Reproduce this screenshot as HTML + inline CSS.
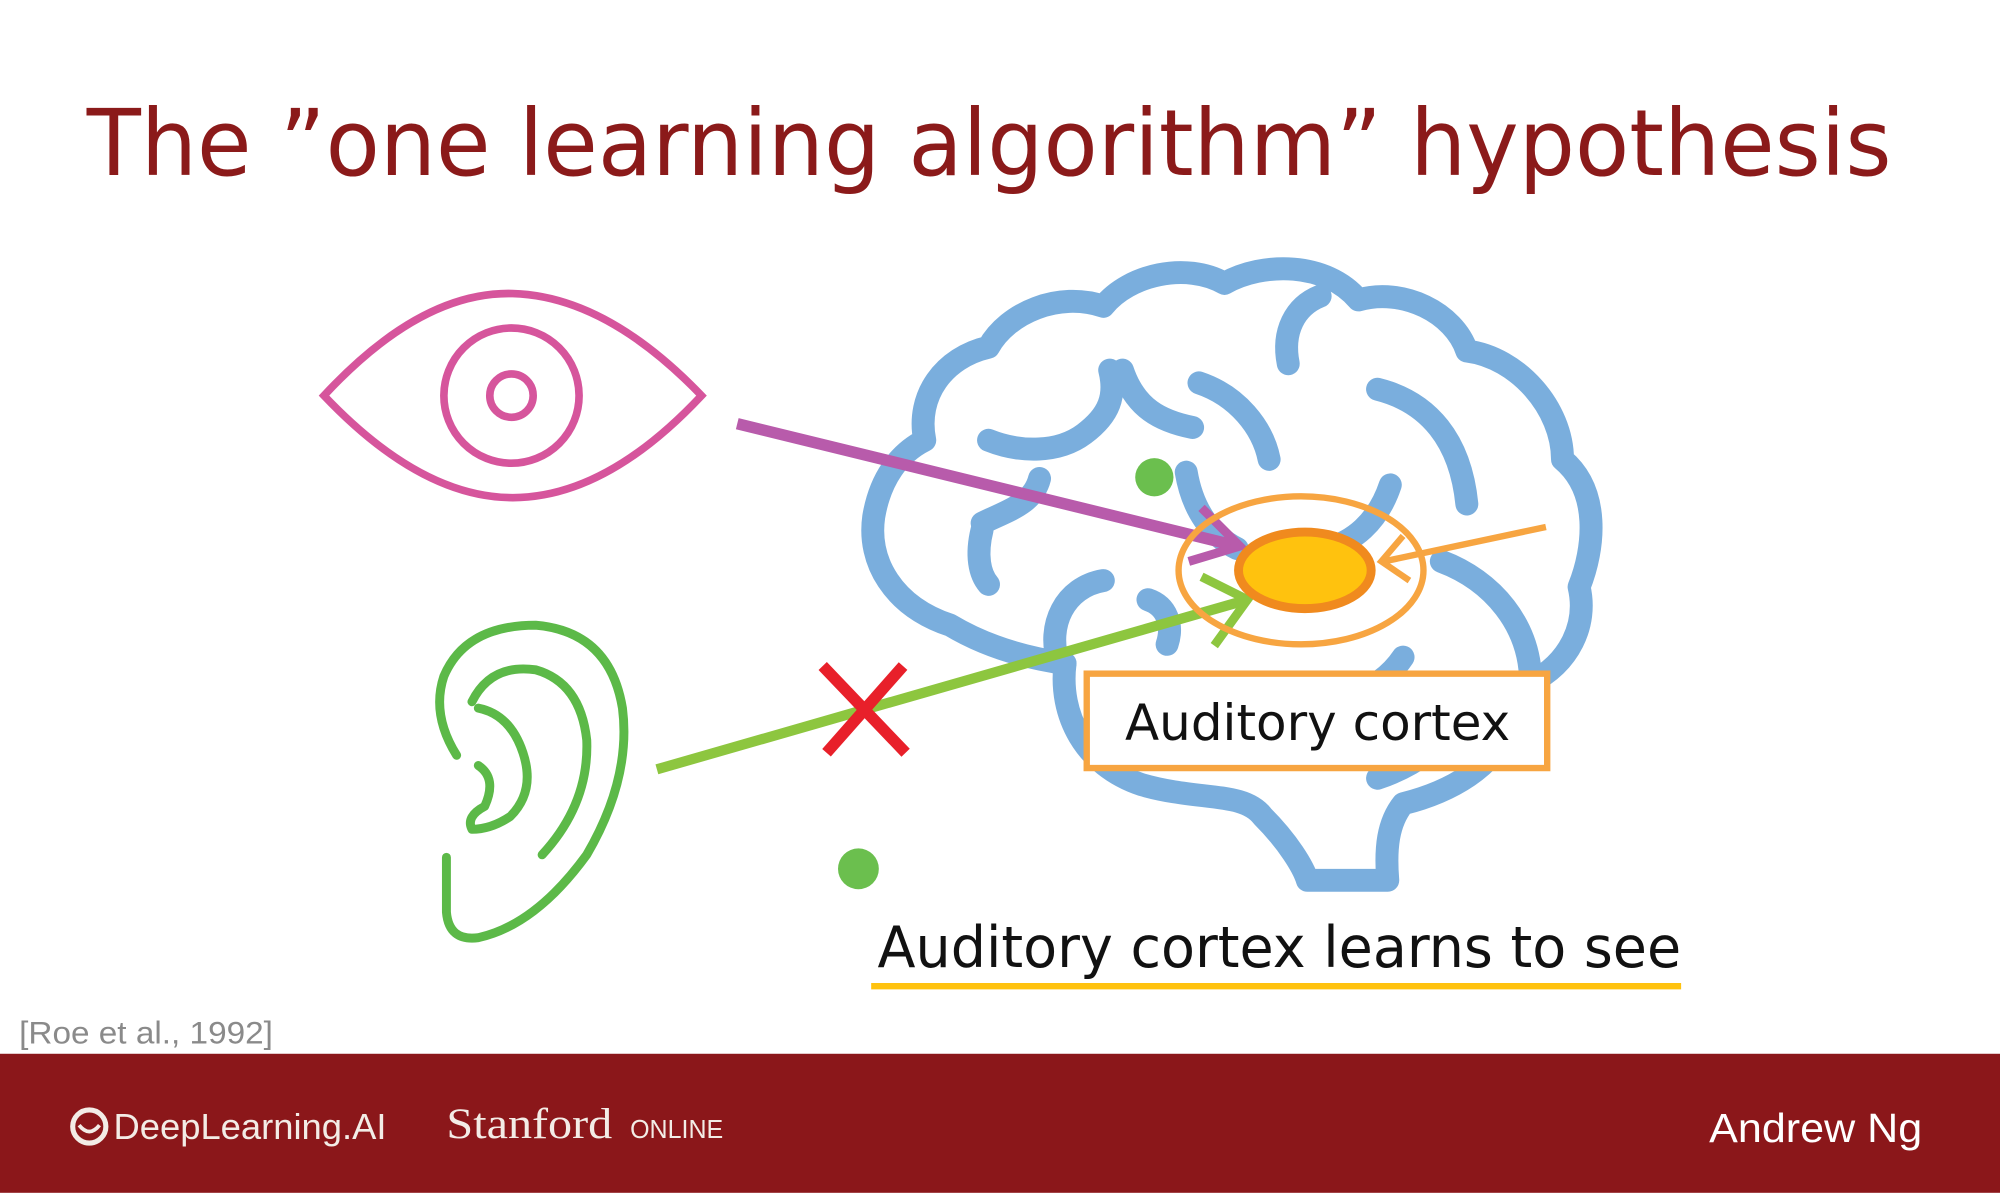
<!DOCTYPE html>
<html><head><meta charset="utf-8"><style>
html,body{margin:0;padding:0;background:#fff;}
svg{display:block}
</style></head><body>
<svg width="2000" height="1193" viewBox="0 0 1568 935" xmlns="http://www.w3.org/2000/svg">
<rect width="1568" height="935" fill="#fff"/>
<text x="68" y="137" font-family="DejaVu Sans, sans-serif" font-size="72" fill="#8B1A1A" textLength="1415" lengthAdjust="spacingAndGlyphs">The ”one learning algorithm” hypothesis</text>

<!-- Brain -->
<g fill="none" stroke="#7AAEDD" stroke-width="18" stroke-linecap="round" stroke-linejoin="round">
<path d="M835 520 C800 515 770 505 745 490 C700 475 680 440 685 405 C690 375 705 355 725 345 C718 310 740 280 775 272 C790 245 830 228 865 240 C885 215 930 205 960 222 C990 205 1040 205 1065 235 C1100 225 1140 245 1150 275 C1190 280 1225 320 1225 360 C1255 385 1250 430 1238 460 C1245 490 1230 520 1200 535"/>
<path d="M835 520 C830 560 850 600 895 615 C940 628 975 620 990 640 C1010 660 1022 680 1025 690 L1088 690 C1086 665 1088 645 1100 630 C1140 620 1170 600 1180 575"/>
<path d="M1200 535 C1200 490 1170 455 1130 440"/>
<path d="M1160 540 C1140 580 1110 600 1080 610"/>
<path d="M775 345 C800 355 830 355 850 340 C870 325 875 310 870 290"/>
<path d="M880 290 C890 320 910 330 935 335"/>
<path d="M940 300 C970 310 990 335 995 360"/>
<path d="M1010 285 C1005 260 1015 240 1035 232"/>
<path d="M1080 305 C1120 315 1145 345 1150 395"/>
<path d="M930 370 C935 400 950 420 970 430"/>
<path d="M1090 380 C1080 410 1060 425 1040 430"/>
<path d="M770 410 C790 400 810 395 815 375"/>
<path d="M770 415 C765 435 768 450 775 458"/>
<path d="M865 455 C835 460 820 490 830 520"/>
<path d="M900 470 C915 475 920 490 915 505"/>
<path d="M1100 515 C1090 530 1075 540 1060 545"/>
</g>
<circle cx="905" cy="374" r="15" fill="#6BBF4E"/>
<circle cx="673" cy="681" r="16" fill="#6BBF4E"/>

<!-- Eye -->
<g fill="none" stroke="#D6559C" stroke-width="6">
<path d="M254 310 Q330 228 402 230 Q475 232 550 310 Q475 390 402 390 Q330 390 254 310 Z"/>
<circle cx="401" cy="310" r="53"/>
<circle cx="401" cy="310" r="17"/>
</g>

<!-- Ear -->
<g fill="none" stroke="#5CB948" stroke-width="7" stroke-linecap="round" stroke-linejoin="round">
<path d="M350 672 L350 715 Q352 738 375 735 Q420 725 460 670 Q495 610 488 555 Q478 495 420 490 Q365 490 348 530 Q338 560 358 592"/>
<path d="M370 550 Q385 520 420 525 Q455 535 460 580 Q462 630 425 670"/>
<path d="M375 555 Q400 560 410 590 Q420 620 400 640 Q385 650 370 650 Q365 640 380 632 Q390 610 375 600"/>
</g>

<!-- Arrows -->
<g fill="none" stroke-linecap="butt" stroke-linejoin="miter">
<path d="M578 332 L970 428" stroke="#B85BAB" stroke-width="9"/>
<path d="M942 398 L972 428 L932 440" stroke="#B85BAB" stroke-width="7"/>
<path d="M515 603 L978 470" stroke="#8DC63F" stroke-width="8"/>
<path d="M942 452 L978 470 L952 506" stroke="#8DC63F" stroke-width="7"/>
<path d="M1212 413 L1085 440" stroke="#F7A541" stroke-width="5"/>
<path d="M1100 420 L1083 440 L1105 455" stroke="#F7A541" stroke-width="5"/>
</g>
<path d="M645 522 L710 590 M708 522 L648 590" stroke="#E8202A" stroke-width="9"/>

<ellipse cx="1020" cy="447" rx="96" ry="58" fill="none" stroke="#F7A541" stroke-width="5"/>
<ellipse cx="1023" cy="447" rx="52" ry="30" fill="#FFC20E" stroke="#F08A1E" stroke-width="7"/>

<rect x="852" y="528" width="361" height="74" fill="#fff" stroke="#F7A541" stroke-width="5"/>
<text x="882" y="580" font-family="DejaVu Sans, sans-serif" font-size="39" fill="#111" textLength="302" lengthAdjust="spacingAndGlyphs">Auditory cortex</text>

<text x="688" y="758" font-family="DejaVu Sans, sans-serif" font-size="45" fill="#111" textLength="630" lengthAdjust="spacingAndGlyphs">Auditory cortex learns to see</text>
<line x1="683" y1="773" x2="1318" y2="773" stroke="#FFC20E" stroke-width="5"/>

<text x="15" y="818" font-family="Liberation Sans, sans-serif" font-size="25" fill="#8a8a8a" textLength="199" lengthAdjust="spacingAndGlyphs">[Roe et al., 1992]</text>

<rect x="0" y="826" width="1568" height="109" fill="#8B171A"/>
<circle cx="70" cy="883" r="13" fill="none" stroke="#f3ece6" stroke-width="4"/>
<path d="M62 882 Q70 892 78 882" fill="none" stroke="#f3ece6" stroke-width="3"/>
<text x="89" y="893" font-family="Liberation Sans, sans-serif" font-size="28" fill="#f3ece6" textLength="214" lengthAdjust="spacingAndGlyphs">DeepLearning.AI</text>
<text x="350" y="892" font-family="Liberation Serif, serif" font-size="34" fill="#f3ece6" textLength="130" lengthAdjust="spacingAndGlyphs">Stanford</text>
<text x="494" y="892" font-family="Liberation Sans, sans-serif" font-size="20" fill="#f3ece6" textLength="73" lengthAdjust="spacingAndGlyphs">ONLINE</text>
<text x="1340" y="895" font-family="Liberation Sans, sans-serif" font-size="32" fill="#fff" textLength="167" lengthAdjust="spacingAndGlyphs">Andrew Ng</text>
</svg>
</body></html>
